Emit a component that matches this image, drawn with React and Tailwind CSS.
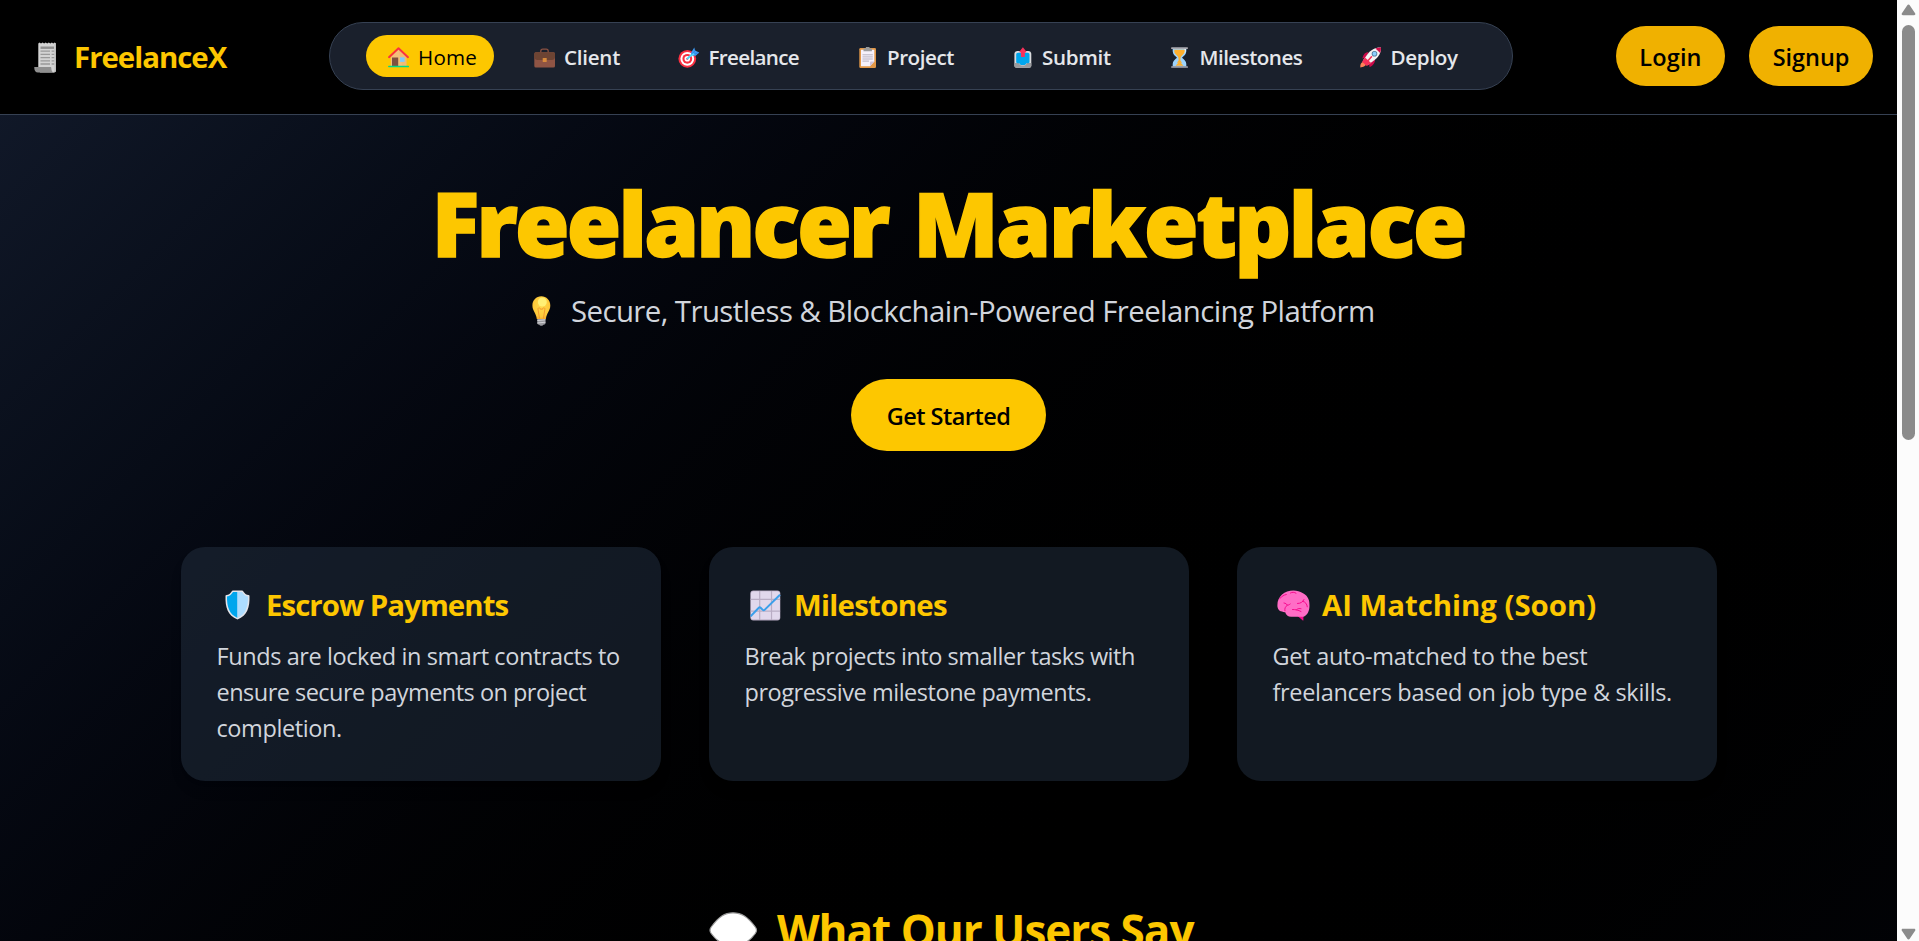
import React from "react";

/* ---------- Icons ---------- */

const Receipt = () => (
  <svg className="h-[31px] w-[23px] shrink-0" viewBox="0 0 23 31">
    <path d="M4.3 1.5 5.6.4 7 1.6 8.6.4l1.5 1.2L11.7.4l1.5 1.2L14.800.4l1.5 1.2L17.900.4l1.3 1.2L20.700.4l1.3 1.1V28a2.5 2.5 0 0 1-2.5 2.5H6L4.3 26z" fill="#d3d3d3" />
    <path d="M22 2v26a2.5 2.5 0 0 1-2.5 2.5h-1.2A2.7 2.7 0 0 0 20.6 28V2z" fill="#bdbdbd" />
    <path d="M6.5 4.5h13.5v2.4H6.5z" fill="#8e8e8e" />
    <path d="M6.5 9.2h9.5M17.6 9.2h2.6M6.5 12.4h9.5M17.6 12.4h2.6M6.5 15.6h9.5M17.6 15.6h2.6M6.5 18.8h9.5M17.6 18.8h2.6M6.5 22h9.5M17.6 22h2.6" stroke="#999" strokeWidth="1.3" />
    <path d="M.3 25h16.2c.6 0 .8.5.8 1 0 2 .7 4.500 2.5 4.500H4C1.6 30.500.3 28.600.3 26z" fill="#8f8f8f" />
  </svg>
);

const House = () => (
  <svg className="h-[21px] w-[21px] shrink-0" viewBox="0 0 21 21">
    <path d="M2.8 10 10.5 2l7.9 8v9.5H2.8z" fill="#f3c07b" />
    <path d="M10.5 2 18.4 10v9.5h-4z" fill="#efb56d" opacity=".5" />
    <rect x="4" y="10.5" width="6.2" height="9" fill="#80503f" />
    <rect x="12" y="10.3" width="4.6" height="4.6" fill="#80cbfb" />
    <path d="M1 10.2 10.5 1.2l9.5 9" fill="none" stroke="#fb3140" strokeWidth="1.9" strokeLinecap="round" strokeLinejoin="round" />
    <path d="M.8 19.6h19.6" stroke="#00d98b" strokeWidth="1.5" strokeLinecap="round" />
  </svg>
);

const Briefcase = () => (
  <svg className="h-[21px] w-[21px] shrink-0" viewBox="0 0 21 21">
    <path d="M6.8 6V4.2c0-1.2.8-2 2-2h3.4c1.2 0 2 .8 2 2V6" fill="none" stroke="#8b5142" strokeWidth="1.3" />
    <rect x=".3" y="5.3" width="20.7" height="15.2" rx="1.6" fill="#8f5444" />
    <path d="M1.9 5.3h17.5c.9 0 1.6.7 1.6 1.6V10c0 1.8-1.4 3-3.2 3H3.5C1.7 13 .3 11.8.3 10V6.9c0-.9.7-1.6 1.6-1.6z" fill="#6d4433" />
    <rect x="8.7" y="11" width="4" height="4" rx=".6" fill="#d98b3c" />
  </svg>
);

const Dart = () => (
  <svg className="h-[21px] w-[26px] shrink-0" viewBox="0 0 26 21">
    <circle cx="9.3" cy="11.8" r="8.9" fill="#f92f40" />
    <circle cx="9.3" cy="11.8" r="6.9" fill="#fff" />
    <circle cx="9.3" cy="11.8" r="4.9" fill="#f92f40" />
    <circle cx="9.3" cy="11.8" r="2.8" fill="#fff" />
    <circle cx="9.3" cy="11.8" r="1.1" fill="#f92f40" />
    <path d="M9.5 11.6 16.5 5" stroke="#4fd8fb" strokeWidth="1.9" strokeLinecap="round" />
    <path d="M13 5.8 16.3.6l.7 2.9 4.2 1.900-3.500 3.400-4.200-.4z" fill="#3f9cf5" />
    <path d="M14.5 7.3 17 3.700M15 7.6l5.800-2" stroke="#2b83e0" strokeWidth=".9" fill="none" />
    <path d="m11 10.3 4.5-4.3 1.3 1.4z" fill="#50e2ff" />
  </svg>
);

const Clipboard = () => (
  <svg className="h-[21px] w-[18px] shrink-0" viewBox="0 0 18 21">
    <rect x=".3" y="1" width="16.7" height="20" rx="1.3" fill="#e19747" />
    <path d="M2 2.7h13.3v11.8l-4.3 4.8H2z" fill="#f6f1fb" />
    <path d="M15.3 14.5 11 19.3v-3.6c0-.7.5-1.2 1.2-1.2z" fill="#cfc3da" />
    <path d="M4.5 1.4h2.2a2 2 0 0 1 4 0h2.2v2.8H4.5z" fill="#9b9b9b" />
    <path d="M3.5 7.8h10.3M3.5 9.9h10.3M3.5 12h10.3M3.5 14.1h6.5" stroke="#aaa3b2" strokeWidth=".8" />
  </svg>
);

const Outbox = () => (
  <svg className="h-[21px] w-[18px] shrink-0" viewBox="0 0 18 21">
    <path d="M3.5 4h10.8c1.7 0 3 1.3 3 3v11.5c0 1.3-1 2.3-2.3 2.3H2.7C1.4 20.8.4 19.8.4 18.5V7c0-1.7 1.4-3 3.1-3z" fill="#d9dbde" />
    <path d="M.4 16h3.8c.8 0 1 .6 1.4 1.2.5.8 1.2 1.2 2 1.2h2.5c.8 0 1.5-.4 2-1.2.4-.6.6-1.2 1.4-1.2h3.8v2.7c0 1.2-1 2.1-2.2 2.1H2.6A2.1 2.1 0 0 1 .4 18.7z" fill="#999b9e" />
    <path d="M4 5.7h9.7c1 0 1.8.8 1.8 1.8V15c0 .7-.5 1.2-1.2 1.2h-1.6c-.8 0-1 1.9-2.3 1.9H7.3c-1.3 0-1.5-1.9-2.3-1.9H3.4c-.7 0-1.2-.5-1.2-1.2V7.5c0-1 .8-1.8 1.8-1.8z" fill="#00a6ed" />
    <path d="M8.9.2 12.3 4.6c.3.4 0 .9-.5.9H10.8V10H7V5.500H6c-.5 0-.8-.5-.5-.9z" fill="#f8315a" />
  </svg>
);

const Hourglass = () => (
  <svg className="h-[21px] w-[19px] shrink-0" viewBox="0 0 19 21">
    <path d="M1.7 1.5h13.6v2.8c0 3.2-2.3 4.6-4.3 6.4 2 1.8 4.3 3.2 4.3 6.4v2.5H1.7v-2.5c0-3.2 2.3-4.6 4.3-6.4-2-1.8-4.3-3.2-4.3-6.4z" fill="#9ed3fb" />
    <path d="M13.3 2v2.5c0 2.4-1.5 3.6-3 5l4.3-4.5.5-3z" fill="#e3f4ff" />
    <path d="M3.3 2.8h10.4v1.7c0 2-2.2 3.3-3.4 4.7-.8.9-.9 2-.9 4.3l1.7 2.3H5.9l1.7-2.3c0-2.3-.1-3.4-.9-4.3C5.5 7.8 3.3 6.5 3.3 4.5z" fill="#ffb02e" />
    <path d="m8.5 14.5 4 4.3h-8z" fill="#ffb02e" />
    <path d="M.8 1.1h15.4M.8 20h15.4" stroke="#a9a9b1" strokeWidth="1.7" strokeLinecap="round" />
  </svg>
);

const Rocket = () => (
  <svg className="h-[21px] w-[22px] shrink-0" viewBox="0 0 22 21">
    <path d="M8.4 5.2C5.5 5 3.3 7 2.3 11.6l4.5-1.2z" fill="#ca0b4a" />
    <path d="M15 12.5c.3 3-1.6 5.8-5.4 7.8l-.7-4.6z" fill="#ca0b4a" />
    <path d="M.3 20.5c-.2-2.4.4-4.6 2-5.3 1.3-.5 3 .3 3.5 1.6.7 2-2.8 3.6-5.5 3.7z" fill="#ff8257" />
    <path d="M21 .4c.3 5.4-2.6 9.6-6.7 12.9l-6.1 4.500-5.100-4.600 4.600-6.300C11 2.600 15.500.1 21 .4z" fill="#f4f4f4" />
    <path d="M21 .4c.1 2-.2 3.8-.9 5.500L15.500 1.500C17.200.7 19 .3 21 .4z" fill="#d30d4b" />
    <path d="m5 10.6-3 4.2 4.9 4.3 4.3-3z" fill="#f8315a" />
    <circle cx="14.5" cy="6.8" r="2.8" fill="#4d7a9a" />
    <circle cx="14.5" cy="6.8" r="2" fill="#8ad0fd" />
    <path d="m11.5 9.8-5.7 6.4" stroke="#f8315a" strokeWidth="1.6" strokeLinecap="round" />
  </svg>
);

const Bulb = () => (
  <svg className="h-[30px] w-[19px] shrink-0" viewBox="0 0 19 30">
    <defs>
      <radialGradient id="bulb" cx=".5" cy=".45" r=".6">
        <stop offset="0" stopColor="#ffd84c" />
        <stop offset=".75" stopColor="#fdc93a" />
        <stop offset="1" stopColor="#f3a62c" />
      </radialGradient>
    </defs>
    <path d="M9.3.3c5.2 0 9 4 9 9.2 0 5.5-3.8 7.5-4.4 13.5H4.8C4.2 17 .4 15 .4 9.5.4 4.3 4.2.3 9.3.3z" fill="url(#bulb)" />
    <circle cx="10.3" cy="6" r="4.5" fill="#fff37a" opacity=".9" />
    <path d="M7.5 22.5 6 13.2c-.3-1.7 2.3-2 2.3 0h2.3c0-2 2.6-1.7 2.3 0l-1.5 9.3" fill="none" stroke="#f2942c" strokeWidth=".9" />
    <path d="M5.3 23h8.2v4.2c0 .6-.4 1-1 1.2l-1.1.3c-.3.7-.9 1-1.6 1h-.9c-.7 0-1.3-.3-1.6-1l-1-.3c-.6-.2-1-.6-1-1.2z" fill="#9a9a9f" />
    <path d="m5.3 24.6 8.2-.8M5.3 27l8.2-.8" stroke="#d2d2d6" strokeWidth="1" />
  </svg>
);

const Shield = () => (
  <svg className="h-[30px] w-[25px] shrink-0" viewBox="0 0 25 30">
    <path d="M8 .5h9c.7 0 1 .3 1.4.9 1.2 2 2.8 3.2 5.2 3.7.6.1.9.4.9 1C24.8 17.5 22.5 25.5 12.5 29.5 2.5 25.5.2 17.500.5 6.100c0-.6.3-.9.9-1C3.800 4.600 5.400 3.400 6.600 1.400 7 .8 7.300.5 8 .5z" fill="#e3e4ea" />
    <path d="M12.5 1.9H8C6.7 4.2 4.7 5.8 2 6.5 1.9 16.8 4 24 12.5 28z" fill="#00a6ed" />
    <path d="M12.5 1.9H17c1.3 2.3 3.3 3.9 6 4.6C23.1 16.8 21 24 12.5 28z" fill="#aeddff" />
  </svg>
);

const Chart = () => (
  <svg className="h-[31px] w-[31px] shrink-0" viewBox="0 0 31 31">
    <rect x=".3" y=".5" width="30" height="30" rx="3" fill="#b2a6bd" />
    <rect x=".9" y="1.2" width="29" height="28.4" rx="2.6" fill="#e1d8ec" />
    <path d="M9.7 1v29M21.5 1v29M.6 9.3h29.5M.6 21.2h29.5" stroke="#b9adc4" strokeWidth="1.2" />
    <path d="m.6 26.2 8.2-8.500c.6-.6 1.200-.6 1.800 0l2.200 2.200c.6.6 1.200.6 1.800 0L30 4.800" fill="none" stroke="#3b9fea" strokeWidth="2" />
  </svg>
);

const Brain = () => (
  <svg className="h-[31px] w-[33px] shrink-0" viewBox="0 0 33 31">
    <path d="m20 25.5 5.8 5c.4.3.7 0 .6-.5V24z" fill="#f70a8d" />
    <path d="M16.5.5c3.5 0 6.6 1 9 2.6C29.5 4.8 32.5 8.9 32.4 14c.3 3.5-.2 8-3 10.8-1 1.4-2.7 2.1-4.5 2H14.5c-3.2.2-5.7-1.8-6.3-4.6-1 .1-2.2-.1-3.2-.7C2 21.2.3 18.500.4 15.200.3 6.500 7.500.5 16.500.5z" fill="#ff6dc6" />
    <path d="M2.8 8.5C5 6.5 6.8 4.8 9.3 4.5M13.5 3c1.7-1 3.7-1 5.5.2M7 13c1.6.2 2.6 1 3.2 2.2 1.2 0 2-.4 3-1.2M10.2 15.2c-1.9 1.5-2.8 3.3-2.3 5.5M15.5 19.5c3 0 5.7.5 8.5 2M19.5 19.7c1.7-1.6 3.2-1.2 4.5-1M20.5 13.5c3.3 0 5.3-1.6 6.5-4M25.7 11.3c2.6.3 4.3 2.8 4.6 5.5" fill="none" stroke="#f70a8d" strokeWidth="1" strokeLinecap="round" />
  </svg>
);

const Bubble = () => (
  <svg className="h-[38px] w-[49px] shrink-0" viewBox="0 0 49 38">
    <path d="M24 .8c8.500 0 14.500 3.800 22.300 14.200 1.600 2.200 1.600 4.400 0 6.500C41 28.500 36 33 24 33c-2 0-4-.2-6 4l-3-5C9.500 30 6 26.500 2.200 21.500c-1.600-2.100-1.600-4.300 0-6.500C10 4.600 15.500.8 24 .8z" fill="#fff" stroke="#9b9b9b" strokeWidth="1.2" />
  </svg>
);

/* ---------- Data ---------- */

const links = [
  { label: "Home", icon: <House />, box: "w-[128px] bg-yellow-400 text-black font-medium", ls: "tracking-[0.2px]", off: "pl-[22px]", slot: "w-[30px]" },
  { label: "Client", icon: <Briefcase />, box: "w-[126px] font-semibold", ls: "tracking-[-0.26px]", off: "pl-[22px]", slot: "w-[30px]" },
  { label: "Freelance", icon: <Dart />, box: "w-[161px] font-semibold", ls: "tracking-[-0.67px]", off: "pl-[22px]", slot: "w-[30.5px]" },
  { label: "Project", icon: <Clipboard />, box: "w-[137px] font-semibold", ls: "tracking-[-0.47px]", off: "pl-[24px]", slot: "w-[28px]" },
  { label: "Submit", icon: <Outbox />, box: "w-[139px] font-semibold", ls: "tracking-[-0.32px]", off: "pl-[24px]", slot: "w-[28px]" },
  { label: "Milestones", icon: <Hourglass />, box: "w-[173px] font-semibold", ls: "tracking-[-0.53px]", off: "pl-[24px]", slot: "w-[28.5px]" },
  { label: "Deploy", icon: <Rocket />, box: "w-[138px] font-semibold", ls: "tracking-[-0.3px]", off: "pl-[22px]", slot: "w-[30.5px]" },
];

const cards = [
  {
    title: "Escrow Payments", tls: "tracking-[-0.95px]", icon: <Shield />, slot: "w-[49.5px] pl-[8px]",
    lines: [
      ["Funds are locked in smart contracts to", "tracking-[-0.41px]"],
      ["ensure secure payments on project", "tracking-[-0.52px]"],
      ["completion.", "tracking-[-0.4px]"],
    ],
  },
  {
    title: "Milestones", tls: "tracking-[-0.7px]", icon: <Chart />, slot: "w-[49.5px] pl-[5px]",
    lines: [
      ["Break projects into smaller tasks with", "tracking-[-0.48px]"],
      ["progressive milestone payments.", "tracking-[-0.47px]"],
    ],
  },
  {
    title: "AI Matching (Soon)", tls: "tracking-[-0.03px]", icon: <Brain />, slot: "w-[49.5px] pl-[4px]",
    lines: [
      ["Get auto-matched to the best", "tracking-[-0.28px]"],
      ["freelancers based on job type & skills.", "tracking-[-0.32px]"],
    ],
  },
];

/* ---------- Sections ---------- */

function Header() {
  return (
    <header className="flex h-[115px] shrink-0 items-start justify-between border-b border-gray-700 bg-black pr-6 pl-[34px]">
      <div className="mt-[37px] flex h-[42px] w-[295px] items-center">
        <div className="flex w-[40px] pb-[1px]"><Receipt /></div>
        <span className="-mt-[2px] text-[29.4px] leading-[42px] font-bold tracking-[-1px] text-yellow-400">FreelanceX</span>
      </div>
      <nav className="mt-[22px] flex h-[68px] w-[1184px] items-center gap-[18px] rounded-full border border-gray-700 bg-[#1a202c] px-9 text-[20.6px] text-gray-200">
        {links.map((l) => (
          <a key={l.label} className={`flex h-[42px] shrink-0 items-center rounded-full ${l.box} ${l.off}`}>
            <span className={`flex shrink-0 pt-[2px] ${l.slot}`}>{l.icon}</span>
            <span className={`pt-[2px] leading-[30px] ${l.ls}`}>{l.label}</span>
          </a>
        ))}
      </nav>
      <div className="mt-[26px] ml-auto flex gap-6 text-[23.5px] leading-[36px] font-semibold text-black">
        <button className="h-[60px] w-[109px] rounded-full bg-yellow-500 pt-[2px] tracking-[0.13px]">Login</button>
        <button className="h-[60px] w-[124px] rounded-full bg-yellow-500 pt-[2px] tracking-[-0.04px]">Signup</button>
      </div>
    </header>
  );
}

function Hero() {
  return (
    <section className="flex flex-col items-center pt-[63px]">
      <h1 className="text-[88.2px] leading-[90px] font-extrabold tracking-[-2.27px] whitespace-nowrap text-yellow-400 [-webkit-text-stroke:1.6px_currentColor]">
        <span className="mr-[5px] tracking-[-2.8px]">Freelancer</span> Marketplace
      </h1>
      <p className="mt-[22px] flex h-[42px] items-center pl-[10px] text-[29.4px] leading-[42px] tracking-[-0.57px] text-gray-300">
        <span className="flex w-[38.5px] shrink-0"><Bulb /></span>
        <span className="whitespace-nowrap">Secure, Trustless &amp; Blockchain-Powered Freelancing Platform</span>
      </p>
      <button className="mt-[47px] h-[72px] w-[195px] rounded-full bg-yellow-400 pt-[2px] text-[23.5px] leading-[36px] font-semibold tracking-[-0.52px] text-black">
        Get Started
      </button>
    </section>
  );
}

function Features() {
  return (
    <section className="mx-auto mt-24 grid w-[1536px] grid-cols-3 gap-12">
      {cards.map((c) => (
        <article key={c.title} className="h-[234px] rounded-3xl bg-gray-800/60 px-9 pt-[37px] shadow-lg">
          <h3 className="mb-3 flex h-[42px] items-center text-[29.4px] leading-[42px] font-bold text-yellow-400">
            <span className={`flex shrink-0 ${c.slot}`}>{c.icon}</span>
            <span className={c.tls}>{c.title}</span>
          </h3>
          <p className="text-[23.5px] leading-[36px] text-gray-300">
            {c.lines.map(([t, ls]) => (
              <span key={t} className={`block whitespace-nowrap ${ls}`}>{t}</span>
            ))}
          </p>
        </article>
      ))}
    </section>
  );
}

function Scrollbar() {
  return (
    <aside className="flex h-[941px] w-[22px] shrink-0 flex-col items-center bg-[#fcfcfc] pt-1 pb-[1px]">
      <svg className="h-[12px] w-[15px]" viewBox="0 0 15 12">
        <path d="M6.300 1.200a1.400 1.400 0 0 1 2.400 0l5.400 8c.6 1 .1 2-1 2H1.900c-1.100 0-1.600-1-1-2z" fill="#8b8b8b" />
      </svg>
      <div className="mt-[9px] h-[415px] w-[13px] rounded-full bg-[#8b8b8b]" />
      <svg className="mt-auto h-[12px] w-[15px]" viewBox="0 0 15 12">
        <path d="M6.300 10.800a1.400 1.400 0 0 0 2.400 0l5.400-8c.6-1 .1-2-1-2H1.900c-1.100 0-1.600 1-1 2z" fill="#8b8b8b" />
      </svg>
    </aside>
  );
}

export default function App() {
  return (
    <div className="flex h-[941px] w-[1919px] overflow-hidden bg-black font-['Open_Sans','Noto_Sans',sans-serif]">
      <div className="flex h-[941px] w-[1897px] shrink-0 flex-col overflow-hidden">
        <Header />
        <main className="h-[1913px] shrink-0 bg-linear-to-br from-gray-900 via-black to-gray-900">
          <Hero />
          <Features />
          <section className="mt-[119px] flex h-[60px] items-start justify-center pl-[6px]">
            <span className="mt-[12px] flex w-[67.5px] shrink-0"><Bubble /></span>
            <h2 className="text-[44.1px] leading-[60px] font-bold tracking-[-1.03px] text-yellow-400">What Our Users Say</h2>
          </section>
        </main>
      </div>
      <Scrollbar />
    </div>
  );
}
